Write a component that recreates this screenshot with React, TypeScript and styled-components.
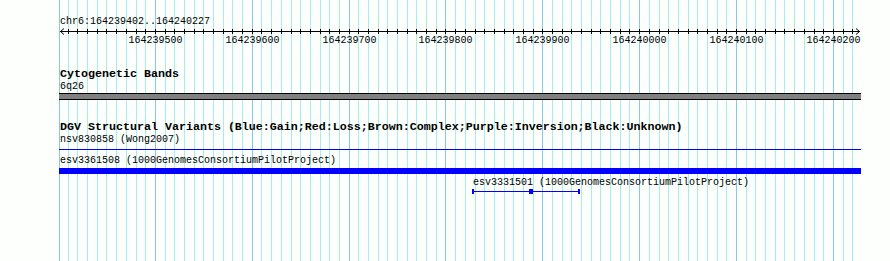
import React from "react";
import styled, { createGlobalStyle } from "styled-components";

const START = 164239402;
const END = 164240227;
const LEFT = 59;
const WIDTH = 802;
const SCALE = 800 / (END - START + 1);

const toX = (bp: number) => Math.round(60 + (bp - START) * SCALE);

const GlobalStyle = createGlobalStyle`
  html, body {
    margin: 0;
    padding: 0;
    background: #fcfffc;
  }
`;

const Page = styled.div`
  position: relative;
  width: 890px;
  height: 261px;
  overflow: hidden;
  background: #fcfffc;
  font-family: "Liberation Mono", "DejaVu Sans Mono", monospace;
  color: #000;
`;

const Grid = styled.div`
  position: absolute;
  inset: 0;
  pointer-events: none;
`;

const GridLine = styled.div<{ $major: boolean }>`
  position: absolute;
  top: 0;
  bottom: 0;
  width: 1px;
  background: ${(p) => (p.$major ? "#86c9e6" : "#a9ecec")};
`;

const Tracks = styled.div`
  position: relative;
  margin-left: ${LEFT}px;
  width: ${WIDTH}px;
  display: flex;
  flex-direction: column;
  padding-top: 16px;
`;

const Label = styled.div`
  font-size: 10px;
  line-height: 12px;
  padding-left: 1px;
  white-space: nowrap;
`;

const Title = styled.div`
  font-size: 11.66px;
  line-height: 13px;
  font-weight: bold;
  padding-left: 1px;
  white-space: nowrap;
`;

const RulerScale = styled.svg`
  display: block;
  width: ${WIDTH}px;
  height: 7px;
`;

const TickLabels = styled.div`
  position: relative;
  height: 12px;
`;

const TickLabel = styled.span`
  position: absolute;
  top: 0;
  font-size: 10px;
  line-height: 12px;
  transform: translateX(-50%);
  white-space: nowrap;
`;

const Track = styled.section`
  display: flex;
  flex-direction: column;
  margin-top: 21px;
`;

const Band = styled.div`
  height: 5px;
  background: #808080;
  border-top: 1px solid #000;
  border-bottom: 1px solid #000;
`;

const Feature = styled.div<{ $gap: number }>`
  display: flex;
  flex-direction: column;
  margin-top: ${(p) => p.$gap}px;
`;

const Bar = styled.div<{ $thick: boolean }>`
  height: ${(p) => (p.$thick ? 6 : 1)}px;
  margin-top: ${(p) => (p.$thick ? 1 : 3)}px;
  background: #0000ff;
`;

const Span = styled.svg`
  display: block;
  height: 5px;
  overflow: visible;
`;

const gridBps: number[] = [];
for (let bp = 164239400; bp <= END; bp += 10) gridBps.push(bp);

const Ruler: React.FC = () => {
  const ticks = gridBps.map(toX).filter((x) => x > 62 && x < 858);
  const majors = gridBps.filter((bp) => bp % 100 === 0 && toX(bp) > 62);
  return (
    <>
      <Label>
        chr6:{START}..{END}
      </Label>
      <RulerScale viewBox={`0 0 ${WIDTH} 7`}>
        <line x1={1} y1={3.5} x2={801} y2={3.5} stroke="#000" strokeWidth={1} />
        <polyline points="5,0.5 1.5,3.5 5,6.5" fill="none" stroke="#000" strokeWidth={1} />
        <polyline points="797,0.5 800.5,3.5 797,6.5" fill="none" stroke="#000" strokeWidth={1} />
        {ticks.map((x) => (
          <line key={x} x1={x - LEFT + 0.5} y1={1} x2={x - LEFT + 0.5} y2={6} stroke="#000" strokeWidth={1} />
        ))}
      </RulerScale>
      <TickLabels>
        {majors.map((bp) => (
          <TickLabel key={bp} style={{ left: toX(bp) - LEFT + 0.5 }}>
            {bp}
          </TickLabel>
        ))}
      </TickLabels>
    </>
  );
};

const App: React.FC = () => {
  const fx = toX(164239827) - LEFT;
  const fw = 108;
  return (
    <Page>
      <GlobalStyle />
      <Grid>
        {gridBps.map((bp) => {
          const x = Math.max(LEFT, toX(bp));
          if (x > 861) return null;
          return <GridLine key={bp} $major={bp % 100 === 0} style={{ left: x }} />;
        })}
      </Grid>
      <Tracks>
        <Ruler />

        <Track>
          <Title>Cytogenetic Bands</Title>
          <Label>6q26</Label>
          <Band />
        </Track>

        <Track>
          <Title>
            DGV Structural Variants (Blue:Gain;Red:Loss;Brown:Complex;Purple:Inversion;Black:Unknown)
          </Title>
          <Feature $gap={0}>
            <Label>nsv830858 (Wong2007)</Label>
            <Bar $thick={false} />
          </Feature>
          <Feature $gap={5}>
            <Label>esv3361508 (1000GenomesConsortiumPilotProject)</Label>
            <Bar $thick />
          </Feature>
          <Feature $gap={3} style={{ marginLeft: fx }}>
            <Label>esv3331501 (1000GenomesConsortiumPilotProject)</Label>
            <Span width={fw} viewBox={`0 0 ${fw} 5`}>
              <line x1={0} y1={2.5} x2={fw} y2={2.5} stroke="#0000ff" strokeWidth={1} />
              <rect x={0} y={0} width={2} height={5} fill="#0000ff" />
              <rect x={57} y={0} width={4} height={5} fill="#0000ff" />
              <rect x={fw - 2} y={0} width={2} height={5} fill="#0000ff" />
            </Span>
          </Feature>
        </Track>
      </Tracks>
    </Page>
  );
};

export default App;
